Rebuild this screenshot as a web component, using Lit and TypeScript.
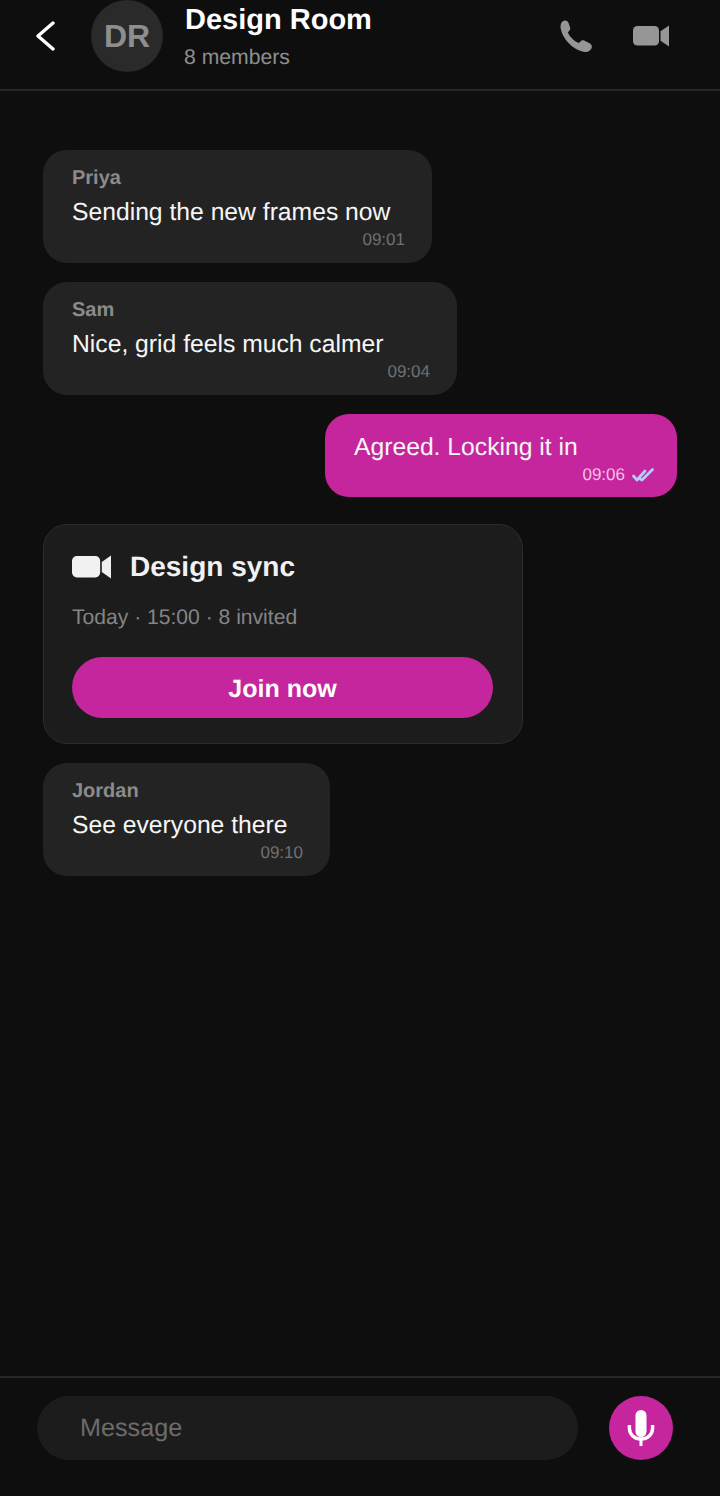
import { LitElement, html, css, svg } from "lit";
import { customElement } from "lit/decorators.js";

const videoPath = svg`<rect x="0" y="1" width="26" height="20" rx="4.5"/><path d="M27.5 6.5 36 0.5V22L27.5 16Z"/>`;

@customElement("app-root")
export class AppRoot extends LitElement {
  static styles = css`
    :host { display: block; width: 720px; height: 1496px; background: #0e0e0f; font-family: "Liberation Sans", Arial, sans-serif; color: #fff; overflow: hidden; text-rendering: geometricPrecision; }
    .page { display: flex; flex-direction: column; height: 1496px; }
    .header { height: 91px; box-sizing: border-box; border-bottom: 2px solid #262627; display: flex; align-items: flex-start; flex: none; }
    .back { margin: 21px 0 0 34px; width: 24px; height: 32px; color: #fff; }
    .avatar { margin-left: 33px; width: 72px; height: 72px; border-radius: 50%; background: #2a2a2b; color: #8e8e8e; font-weight: 700; font-size: 32px; display: flex; align-items: center; justify-content: center; flex: none; }
    .titles { margin-left: 22px; display: flex; flex-direction: column; }
    .title { font-size: 29px; font-weight: 700; line-height: 34px; margin-top: 3px; }
    .sub { font-size: 21.2px; line-height: 26px; color: #8e8e8e; margin-top: 8px; margin-left: -1px; }
    .actions { margin-left: auto; display: flex; align-items: center; gap: 41px; padding: 20px 51px 0 0; color: #969696; }
    .video-h { width: 36px; height: 22px; }
    .video-c { width: 39px; height: 24px; flex: none; }
    .messages { flex: 1; display: flex; flex-direction: column; align-items: flex-start; gap: 19px; padding: 59px 43px 0; }
    .bubble { box-sizing: border-box; height: 113px; border-radius: 24px; background: #232324; padding: 16px 27px 0 29px; display: flex; flex-direction: column; }
    .name { font-size: 20px; font-weight: 700; color: #8b8b8b; line-height: 25px; }
    .text { font-size: 24.7px; line-height: 32px; margin-top: 6px; white-space: nowrap; color: #f6f6f6; }
    .time { align-self: flex-end; font-size: 17px; line-height: 20px; color: #6f6f70; margin-top: 1px; display: flex; align-items: center; gap: 7px; }
    .mine { align-self: flex-end; height: 83px; background: #c6269d; padding: 18px 23px 0 29px; }
    .mine .text { margin-top: 0; }
    .mine .time { color: #f3c0e6; margin-top: 1px; }
    .card { box-sizing: border-box; width: 480px; height: 220px; margin-top: 8px; border: 1px solid #2c2c2d; border-radius: 24px; background: #1c1c1d; padding: 0 29px 0 28px; display: flex; flex-direction: column; }
    .card-head { display: flex; align-items: center; gap: 19px; margin-top: 25px; color: #f1f1f1; height: 34px; }
    .card-title { font-size: 28px; font-weight: 700; }
    .card-meta { font-size: 21.1px; line-height: 26px; color: #858585; margin-top: 21px; }
    .join { margin-top: 26px; height: 61px; border-radius: 31px; background: #c6269d; color: #fff; font-size: 25px; font-weight: 700; display: flex; align-items: center; justify-content: center; padding-top: 3px; box-sizing: border-box; }
    .composer { height: 120px; box-sizing: border-box; border-top: 2px solid #262627; flex: none; display: flex; align-items: flex-start; padding: 18px 47px 0 37px; justify-content: space-between; }
    .input { width: 541px; height: 64px; border-radius: 32px; background: #1c1c1d; color: #6c6c6c; font-size: 25.2px; display: flex; align-items: center; box-sizing: border-box; padding-left: 43px; }
    .mic { width: 64px; height: 64px; border-radius: 50%; background: #c6269d; display: flex; align-items: center; justify-content: center; color: #fff; }
  `;

  private bubble(name: string, text: string, time: string, width: number) {
    return html`<div class="bubble" style="width:${width}px"><div class="name">${name}</div><div class="text">${text}</div><div class="time">${time}</div></div>`;
  }

  render() {
    return html`<div class="page">
      <div class="header">
        <svg class="back" viewBox="0 0 24 32" fill="none" stroke="currentColor" stroke-width="3.4" stroke-linecap="round" stroke-linejoin="round"><path d="M19 2 4 15 19 28"/></svg>
        <div class="avatar">DR</div>
        <div class="titles"><div class="title">Design Room</div><div class="sub">8 members</div></div>
        <div class="actions">
          <svg viewBox="0 0 32 32" width="32" height="32" fill="currentColor"><path d="M2.5 1.5C4.8 -.2 7.8 .5 8.6 3L10 7.2C10.5 8.8 10 10.3 8.8 11.3L7.8 12.2C9.4 16.4 14 21.2 19 23L20.4 21.4C21.5 20.2 23.2 20 24.6 20.7L29.6 23.2C31.7 24.3 32.5 26.7 31.3 28.8 30 31 27.6 32.4 24.6 31.9 13 30 2.5 19 .6 8 .2 5.4 1 3 2.5 1.5Z"/></svg>
          <svg class="video-h" viewBox="0 0 36 22.5" fill="currentColor" preserveAspectRatio="none">${videoPath}</svg>
        </div>
      </div>
      <div class="messages">
        ${this.bubble("Priya", "Sending the new frames now", "09:01", 389)}
        ${this.bubble("Sam", "Nice, grid feels much calmer", "09:04", 414)}
        <div class="bubble mine" style="width:352px">
          <div class="text">Agreed. Locking it in</div>
          <div class="time">09:06
            <svg viewBox="0 0 22 14" width="22" height="14" fill="none" stroke="#b4ccf8" stroke-width="2.7" stroke-linecap="round" stroke-linejoin="round"><path d="M1.5 8 5 12 13 3"/><path d="M8 11 10 12 20.5 1.5"/></svg>
          </div>
        </div>
        <div class="card">
          <div class="card-head"><svg class="video-c" viewBox="0 0 36 22.5" fill="currentColor" preserveAspectRatio="none">${videoPath}</svg><span class="card-title">Design sync</span></div>
          <div class="card-meta">Today · 15:00 · 8 invited</div>
          <div class="join">Join now</div>
        </div>
        ${this.bubble("Jordan", "See everyone there", "09:10", 287)}
      </div>
      <div class="composer">
        <div class="input">Message</div>
        <div class="mic">
          <svg viewBox="0 0 28 36" width="28" height="36" fill="none" stroke="currentColor" stroke-width="3.4"><rect x="8.5" y="0" width="11" height="27" rx="5.5" fill="currentColor" stroke="none"/><path d="M2.4 15V18C2.4 24.5 7.5 29 14 29S25.6 24.5 25.6 18V15"/><path d="M14 29V36" stroke-width="3"/></svg>
        </div>
      </div>
    </div>`;
  }
}
